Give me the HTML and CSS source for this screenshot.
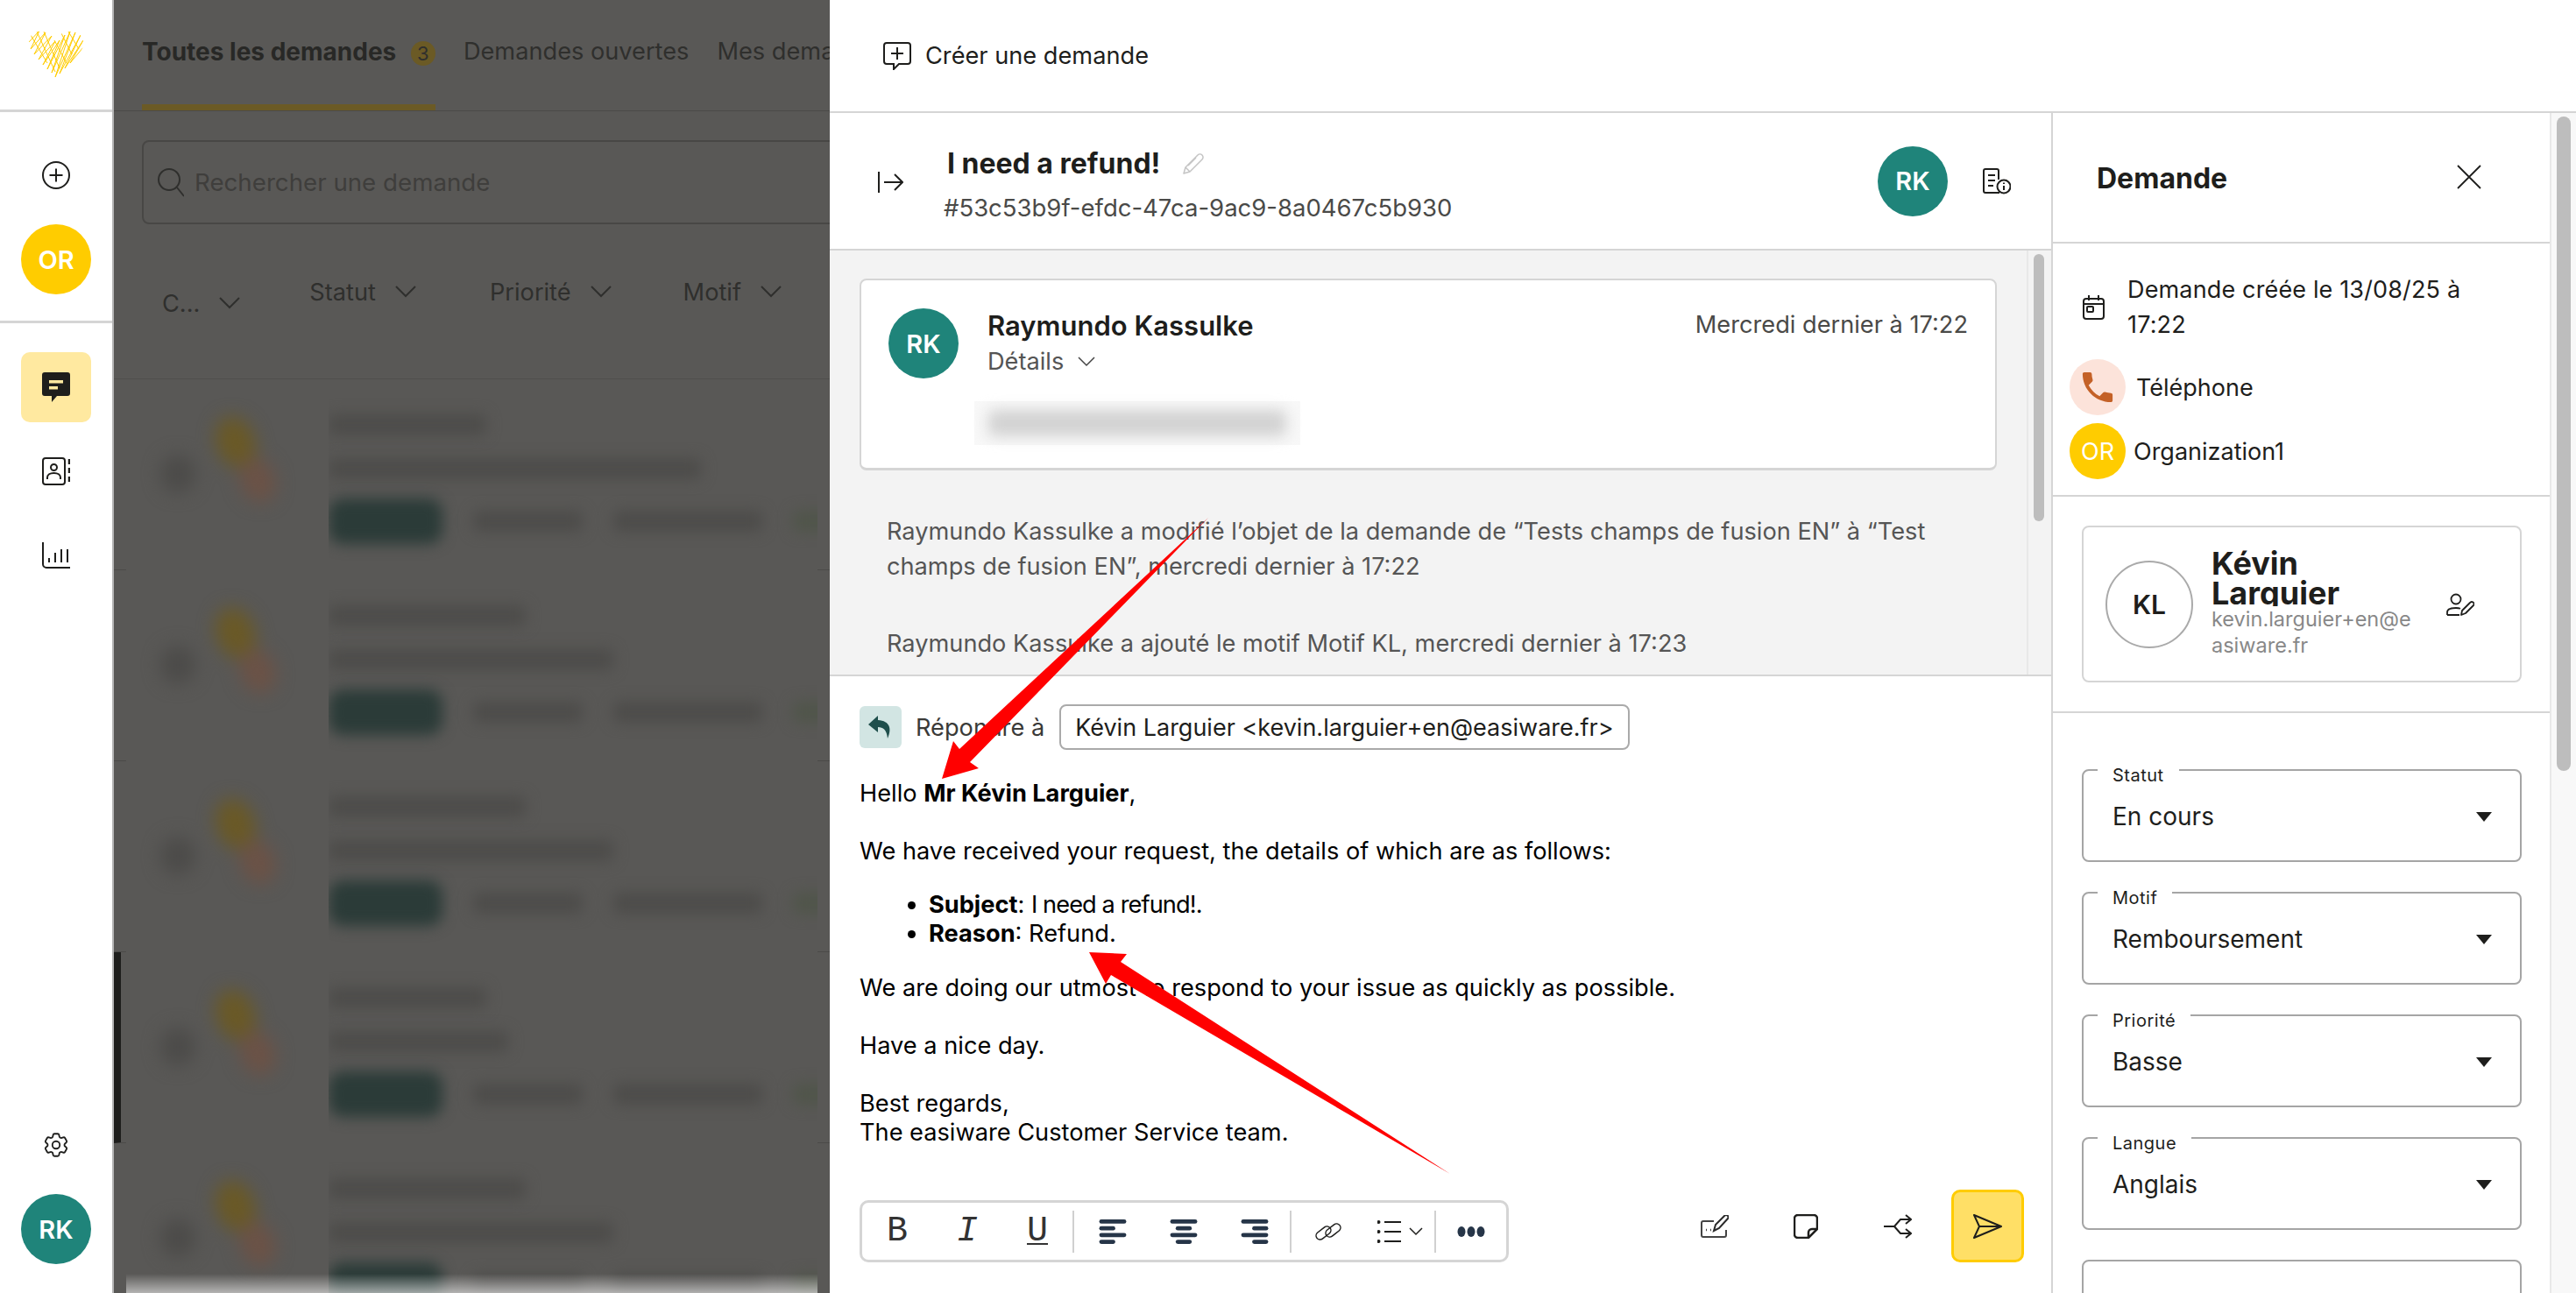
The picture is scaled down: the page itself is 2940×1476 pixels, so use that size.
FILE: index.html
```html
<!DOCTYPE html>
<html>
<head>
    <title>Demandes</title>
    <link rel="stylesheet" href="styles.css">
</head>
<body>
<div class="app">
    <!-- left nav -->
    <nav class="nav">
        <div class="nav-logo">
            <svg width="64" height="56" viewBox="0 0 64 56" fill="none">
                <defs><clipPath id="heart"><path d="M32 55C20 44 1 30 1 15 1 6 8 1 16 2c8 0 13 5 16 10 3-6 9-11 17-10 8 0 14 5 14 13 0 15-19 29-31 40z"/></clipPath></defs>
                <g clip-path="url(#heart)" stroke="#ffcc00" stroke-width="1" stroke-linejoin="round">
                    <path d="M1 14L13 1 3 22 20 3 7 28 27 7 12 34 31 13 17 40 36 12 22 45 42 6 27 49 48 2 31 54 54 3 36 50 60 6 42 44 63 12 48 38 63 20"/>
                    <path d="M3 6L22 38M10 2l21 46M18 2l18 42M30 12l14 26M38 4l12 24M46 2l12 20"/>
                </g>
            </svg>
        </div>
        <div class="nav-org">
            <svg class="ico-plus" width="32" height="32" viewBox="0 0 32 32" fill="none" stroke="#1e1e1c" stroke-width="2">
                <circle cx="16" cy="16" r="15"/><path d="M16 8.500v15M8.500 16h15"/>
            </svg>
            <div class="avatar avatar-or">OR</div>
        </div>
        <div class="nav-menu">
            <div class="nav-item nav-item-active">
                <svg width="32" height="34" viewBox="0 0 32 34">
                    <path fill="#1e1e1c" d="M3 0h26a3 3 0 0 1 3 3v21a3 3 0 0 1-3 3H17l-6 7v-7H3a3 3 0 0 1-3-3V3a3 3 0 0 1 3-3z"/>
                    <path fill="#ffe9a0" d="M8 9h16v3.500H8zM8 16h10v3.500H8z"/>
                </svg>
            </div>
            <div class="nav-item">
                <svg width="32" height="32" viewBox="0 0 32 32" fill="none" stroke="#1e1e1c" stroke-width="2">
                    <rect x="1" y="1" width="25" height="30" rx="3"/>
                    <circle cx="13.500" cy="11.500" r="3.500"/>
                    <path d="M6 25v-2c0-3 3-5 7.500-5s7.500 2 7.500 5v2"/>
                    <path d="M31 2v6M31 12v6M31 22v6" stroke-width="2.500"/>
                </svg>
            </div>
            <div class="nav-item">
                <svg width="32" height="30" viewBox="0 0 32 30" fill="none" stroke="#1e1e1c" stroke-width="2">
                    <path d="M1 0v25a4 4 0 0 0 4 4h27"/>
                    <path d="M8 18v5M15 12v11M22 8v15M29 8v15"/>
                </svg>
            </div>
        </div>
        <div class="nav-bottom">
            <svg width="34" height="34" viewBox="0 0 24 24" fill="none" stroke="#1e1e1c" stroke-width="1.300" stroke-linejoin="round">
                <path d="M9.594 3.940c.09-.542.56-.94 1.110-.94h2.593c.55 0 1.020.398 1.110.94l.213 1.281c.063.374.313.686.645.870.074.040.147.083.22.127.324.196.72.257 1.075.124l1.217-.456a1.125 1.125 0 011.370.49l1.296 2.247a1.125 1.125 0 01-.26 1.431l-1.003.827c-.293.24-.438.613-.431.992a6.759 6.759 0 010 .255c-.007.378.138.75.43.99l1.005.828c.424.35.534.954.26 1.430l-1.298 2.247a1.125 1.125 0 01-1.369.491l-1.217-.456c-.355-.133-.75-.072-1.076.124a6.570 6.570 0 01-.22.128c-.331.183-.581.495-.644.869l-.213 1.280c-.09.543-.56.941-1.110.941h-2.594c-.55 0-1.020-.398-1.110-.94l-.213-1.281c-.062-.374-.312-.686-.644-.87a6.520 6.520 0 01-.22-.127c-.325-.196-.72-.257-1.076-.124l-1.217.456a1.125 1.125 0 01-1.369-.49l-1.297-2.247a1.125 1.125 0 01.26-1.431l1.004-.827c.292-.24.437-.613.43-.992a6.932 6.932 0 010-.255c.007-.378-.138-.75-.43-.99l-1.004-.828a1.125 1.125 0 01-.26-1.430l1.297-2.247a1.125 1.125 0 011.370-.491l1.216.456c.356.133.751.072 1.076-.124.072-.044.146-.087.22-.128.332-.183.582-.495.644-.869l.214-1.281z"/>
                <circle cx="12" cy="12" r="3"/>
            </svg>
            <div class="avatar avatar-rk">RK</div>
        </div>
    </nav>

    <!-- dimmed list behind the panel -->
    <section class="backdrop">
        <div class="tabs">
            <div class="tab tab-active">Toutes les demandes <span class="tab-count">3</span></div>
            <div class="tab">Demandes ouvertes</div>
            <div class="tab">Mes demandes</div>
        </div>
        <div class="search">
            <svg width="30" height="34" viewBox="0 0 30 34" fill="none" stroke="#2f2f2d" stroke-width="2">
                <circle cx="13" cy="14" r="12"/><path d="M22 23l8 10"/>
            </svg>
            <span>Rechercher une demande</span>
        </div>
        <div class="filters">
            <div class="filter filter-low">C...<svg class="chev" width="24" height="14" viewBox="0 0 24 14"><path d="M1 1l11 11L23 1"/></svg></div>
            <div class="filter filter-statut">Statut<svg class="chev" width="24" height="14" viewBox="0 0 24 14"><path d="M1 1l11 11L23 1"/></svg></div>
            <div class="filter filter-prio">Priorité<svg class="chev" width="24" height="14" viewBox="0 0 24 14"><path d="M1 1l11 11L23 1"/></svg></div>
            <div class="filter">Motif<svg class="chev" width="24" height="14" viewBox="0 0 24 14"><path d="M1 1l11 11L23 1"/></svg></div>
        </div>
        <div class="rows">
            <div class="row"><div class="row-body">
                <svg class="blobs" width="231" height="217" viewBox="0 0 231 217"><ellipse cx="59" cy="108" rx="20" ry="22" fill="#4c4b49"/><ellipse cx="125" cy="72" rx="22" ry="30" fill="#6a5926" transform="rotate(-20 125 72)"/><ellipse cx="150" cy="115" rx="20" ry="26" fill="#6b5246" transform="rotate(-20 150 115)"/></svg>
                <div class="row-text">
                    <div class="bar bar-title"></div>
                    <div class="bar bar-sub"></div>
                    <div class="row-tags"><div class="pill"></div><div class="bar tag-a"></div><div class="bar tag-b"></div><div class="bar tag-c"></div></div>
                </div>
            </div></div>
            <div class="row"><div class="row-body">
                <svg class="blobs" width="231" height="217" viewBox="0 0 231 217"><ellipse cx="59" cy="108" rx="20" ry="22" fill="#4c4b49"/><ellipse cx="125" cy="72" rx="22" ry="30" fill="#6a5926" transform="rotate(-20 125 72)"/><ellipse cx="150" cy="115" rx="20" ry="26" fill="#6b5246" transform="rotate(-20 150 115)"/></svg>
                <div class="row-text">
                    <div class="bar bar-title-wide"></div>
                    <div class="bar bar-sub-short"></div>
                    <div class="row-tags"><div class="pill"></div><div class="bar tag-a"></div><div class="bar tag-b"></div><div class="bar tag-c"></div></div>
                </div>
            </div></div>
            <div class="row"><div class="row-body">
                <svg class="blobs" width="231" height="217" viewBox="0 0 231 217"><ellipse cx="59" cy="108" rx="20" ry="22" fill="#4c4b49"/><ellipse cx="125" cy="72" rx="22" ry="30" fill="#6a5926" transform="rotate(-20 125 72)"/><ellipse cx="150" cy="115" rx="20" ry="26" fill="#6b5246" transform="rotate(-20 150 115)"/></svg>
                <div class="row-text">
                    <div class="bar bar-title-wide"></div>
                    <div class="bar bar-sub-short"></div>
                    <div class="row-tags"><div class="pill"></div><div class="bar tag-a"></div><div class="bar tag-b"></div><div class="bar tag-c"></div></div>
                </div>
            </div></div>
            <div class="row row-selected"><div class="row-body">
                <svg class="blobs" width="231" height="217" viewBox="0 0 231 217"><ellipse cx="59" cy="108" rx="20" ry="22" fill="#4c4b49"/><ellipse cx="125" cy="72" rx="22" ry="30" fill="#6a5926" transform="rotate(-20 125 72)"/><ellipse cx="150" cy="115" rx="20" ry="26" fill="#6b5246" transform="rotate(-20 150 115)"/></svg>
                <div class="row-text">
                    <div class="bar bar-title"></div>
                    <div class="bar bar-sub-tiny"></div>
                    <div class="row-tags"><div class="pill"></div><div class="bar tag-a"></div><div class="bar tag-b"></div><div class="bar tag-c"></div></div>
                </div>
            </div></div>
            <div class="row"><div class="row-body">
                <svg class="blobs" width="231" height="217" viewBox="0 0 231 217"><ellipse cx="59" cy="108" rx="20" ry="22" fill="#4c4b49"/><ellipse cx="125" cy="72" rx="22" ry="30" fill="#6a5926" transform="rotate(-20 125 72)"/><ellipse cx="150" cy="115" rx="20" ry="26" fill="#6b5246" transform="rotate(-20 150 115)"/></svg>
                <div class="row-text">
                    <div class="bar bar-title-wide"></div>
                    <div class="bar bar-sub-short"></div>
                    <div class="row-tags"><div class="pill"></div><div class="bar tag-a"></div><div class="bar tag-b"></div><div class="bar tag-c"></div></div>
                </div>
            </div></div>
        </div>
        <div class="list-fade"></div>
    </section>

    <!-- ticket panel -->
    <main class="panel">
        <header class="panel-top">
            <svg width="32" height="32" viewBox="0 0 32 32" fill="none" stroke="#1e1e1c" stroke-width="2">
                <path d="M4 1h24a3 3 0 0 1 3 3v18a3 3 0 0 1-3 3H18l-6 6v-6H4a3 3 0 0 1-3-3V4a3 3 0 0 1 3-3z"/>
                <path d="M16 6v14M9 13h14"/>
            </svg>
            <span>Créer une demande</span>
        </header>
        <div class="panel-body">
            <div class="ticket">
                <div class="ticket-head">
                    <svg class="ico-collapse" width="29" height="24" viewBox="0 0 29 24" fill="none" stroke="#1e1e1c" stroke-width="2">
                        <path d="M1 0v24M7 12h21M19 3l9 9-9 9"/>
                    </svg>
                    <div class="ticket-title">
                        <div class="ticket-name">I need a refund!
                            <svg width="24" height="24" viewBox="0 0 24 24" fill="none" stroke="#c4c4c4" stroke-width="1.500" stroke-linejoin="round">
                                <path d="M1 23l2-7L17 2a3 3 0 0 1 5 5L8 21zM3 16l5 5M6 14l9-9"/>
                            </svg>
                        </div>
                        <div class="ticket-id">#53c53b9f-efdc-47ca-9ac9-8a0467c5b930</div>
                    </div>
                    <div class="avatar avatar-rk">RK</div>
                    <svg class="ico-doc" width="32" height="30" viewBox="0 0 32 30" fill="none" stroke="#1e1e1c" stroke-width="2">
                        <path d="M19 28H3a2 2 0 0 1-2-2V3a2 2 0 0 1 2-2h13a2 2 0 0 1 2 2v10"/>
                        <path d="M6 8h8M6 14h8M6 20h6"/>
                        <circle cx="24" cy="21" r="7.500"/>
                        <path d="M24 20v5M24 16.500v1.500"/>
                    </svg>
                </div>
                <div class="thread">
                    <div class="thread-main">
                        <article class="mail-card">
                            <div class="mail-head">
                                <div class="avatar avatar-rk">RK</div>
                                <div class="mail-from">
                                    <div class="mail-name">Raymundo Kassulke</div>
                                    <div class="mail-details">Détails
                                        <svg width="20" height="12" viewBox="0 0 20 12" fill="none" stroke="#444" stroke-width="1.500"><path d="M1 1l9 9 9-9"/></svg>
                                    </div>
                                </div>
                                <div class="mail-date">Mercredi dernier à 17:22</div>
                            </div>
                            <div class="mail-blur"><div class="mail-blur-text"></div></div>
                        </article>
                        <p class="activity">Raymundo Kassulke a modifié l’objet de la demande de “Tests champs de fusion EN” à “Test champs de fusion EN”, mercredi dernier à 17:22</p>
                        <p class="activity">Raymundo Kassulke a ajouté le motif Motif KL, mercredi dernier à 17:23</p>
                    </div>
                    <div class="scroll scroll-thread"><div class="scroll-thumb"></div></div>
                </div>
                <div class="composer">
                    <div class="reply-row">
                        <div class="reply-btn">
                            <svg width="28" height="26" viewBox="0 0 28 26"><path fill="#1f4f4c" d="M11 0L0 10l11 9v-6c6 0 10 3 11 13 5-11 3-20-11-21z"/></svg>
                        </div>
                        <span class="reply-label">Répondre à</span>
                        <div class="reply-to">Kévin Larguier &lt;kevin.larguier+en@easiware.fr&gt;</div>
                    </div>
                    <div class="mail-body">
                        <p>Hello <b>Mr Kévin Larguier</b>,</p>
                        <p>We have received your request, the details of which are as follows:</p>
                        <ul>
                            <li><b>Subject</b>: <span class="tight">I need a refund!.</span></li>
                            <li><b>Reason</b>: Refund.</li>
                        </ul>
                        <p>We are doing our utmost to respond to your issue as quickly as possible.</p>
                        <p>Have a nice day.</p>
                        <p>Best regards,<br>The easiware Customer Service team.</p>
                    </div>
                    <div class="composer-foot">
                        <div class="toolbar">
                            <div class="tb-group tb-text">
                                <span class="tool tool-letter">B</span>
                                <span class="tool tool-letter tool-i">I</span>
                                <span class="tool tool-letter tool-u">U</span>
                            </div>
                            <div class="tb-group tb-align">
                                <span class="tool">
                                    <svg width="32" height="28" viewBox="0 0 32 29" fill="#263548"><rect width="32" height="5" rx="2.500"/><rect y="8" width="19" height="5" rx="2.500"/><rect y="16" width="32" height="5" rx="2.500"/><rect y="24" width="19" height="5" rx="2.500"/></svg>
                                </span>
                                <span class="tool">
                                    <svg width="32" height="28" viewBox="0 0 32 29" fill="#263548"><rect width="32" height="5" rx="2.500"/><rect x="6.500" y="8" width="19" height="5" rx="2.500"/><rect y="16" width="32" height="5" rx="2.500"/><rect x="6.500" y="24" width="19" height="5" rx="2.500"/></svg>
                                </span>
                                <span class="tool">
                                    <svg width="32" height="28" viewBox="0 0 32 29" fill="#263548"><rect width="32" height="5" rx="2.500"/><rect x="13" y="8" width="19" height="5" rx="2.500"/><rect y="16" width="32" height="5" rx="2.500"/><rect x="13" y="24" width="19" height="5" rx="2.500"/></svg>
                                </span>
                            </div>
                            <div class="tb-group tb-insert">
                                <span class="tool tool-link">
                                    <svg width="32" height="22" viewBox="0 0 32 22" fill="none" stroke="#1e1e1c" stroke-width="1.500">
                                        <rect x="1" y="8" width="19" height="9" rx="4.500" transform="rotate(-38 10.500 12.500)"/>
                                        <rect x="12" y="5" width="19" height="9" rx="4.500" transform="rotate(-38 21.500 9.500)"/>
                                    </svg>
                                </span>
                                <span class="tool tool-list">
                                    <svg width="27" height="28" viewBox="0 0 27 28" fill="none" stroke="#1e1e1c" stroke-width="2">
                                        <path d="M8 3h19M8 14h19M8 25h19"/>
                                        <circle cx="1.500" cy="3" r="1"/><circle cx="1.500" cy="14" r="1"/><circle cx="1.500" cy="25" r="1"/>
                                    </svg>
                                    <svg width="16" height="10" viewBox="0 0 16 10" fill="none" stroke="#1e1e1c" stroke-width="1.500"><path d="M1 1l7 7 7-7"/></svg>
                                </span>
                            </div>
                            <div class="tb-group tb-more">
                                <span class="tool">
                                    <svg width="32" height="14" viewBox="0 0 32 14" fill="#263548"><ellipse cx="5" cy="7" rx="4.500" ry="6"/><ellipse cx="16" cy="7" rx="4.500" ry="6"/><ellipse cx="27" cy="7" rx="4.500" ry="6"/></svg>
                                </span>
                            </div>
                        </div>
                        <div class="actions">
                            <svg class="act-note" width="32" height="26" viewBox="0 0 32 26" fill="none" stroke="#444" stroke-width="2">
                                <path d="M15 7H3a2 2 0 0 0-2 2v14a2 2 0 0 0 2 2h24a2 2 0 0 0 2-2v-6"/>
                                <path d="M15 18l2-7 10-10a2.200 2.200 0 0 1 4 3L21 15z" stroke="#2a2a2a"/>
                                <path d="M6 17h1M11 17h1" stroke-width="2.500"/>
                            </svg>
                            <svg class="act-sticky" width="28" height="28" viewBox="0 0 28 28" fill="none" stroke="#1e1e1c" stroke-width="2.500">
                                <path d="M17 27H5a4 4 0 0 1-4-4V5a4 4 0 0 1 4-4h18a4 4 0 0 1 4 4v12z"/>
                                <path d="M17 27v-6a4 4 0 0 1 4-4h6"/>
                            </svg>
                            <svg class="act-split" width="32" height="28" viewBox="0 0 32 28" fill="none" stroke="#1e1e1c" stroke-width="2">
                                <path d="M0 14h12l7-8h12M12 14l7 8h12M25 1l6 5-6 5M25 17l6 5-6 5"/>
                            </svg>
                            <button class="send">
                                <svg width="33" height="28" viewBox="0 0 33 28" fill="none" stroke="#1e1e1c" stroke-width="2" stroke-linejoin="round">
                                    <path d="M1 1l31 13L1 27l6-13zM7 14h25"/>
                                </svg>
                            </button>
                        </div>
                    </div>
                </div>
            </div>

            <aside class="side">
                <div class="side-main">
                    <div class="side-head">
                        <h2>Demande</h2>
                        <svg width="28" height="28" viewBox="0 0 28 28" fill="none" stroke="#1e1e1c" stroke-width="1.800"><path d="M1 1l26 26M27 1L1 27"/></svg>
                    </div>
                    <div class="side-info">
                        <div class="info-date">
                            <svg width="25" height="28" viewBox="0 0 25 28" fill="none" stroke="#1e1e1c" stroke-width="2">
                                <rect x="1" y="4" width="23" height="23" rx="3"/><path d="M1 10h23M7 0v6M18 0v6"/><rect x="5" y="13" width="7" height="6" rx="1"/>
                            </svg>
                            <span>Demande créée le 13/08/25 à 17:22</span>
                        </div>
                        <div class="info-line">
                            <div class="info-round info-phone">
                                <svg width="38" height="38" viewBox="2 2 20 20"><path fill="#c46127" d="M6.620 10.790c1.440 2.830 3.760 5.140 6.590 6.590l2.200-2.200c.27-.27.67-.36 1.020-.24 1.120.37 2.330.57 3.570.57.55 0 1 .45 1 1V20c0 .55-.45 1-1 1-9.390 0-17-7.610-17-17 0-.55.45-1 1-1h3.500c.55 0 1 .45 1 1 0 1.250.2 2.450.57 3.570.11.35.03.74-.25 1.020l-2.200 2.200z"/></svg>
                            </div>
                            <span class="info-phone-label">Téléphone</span>
                        </div>
                        <div class="info-line">
                            <div class="info-round info-org">OR</div>
                            <span>Organization1</span>
                        </div>
                    </div>
                    <div class="side-contact">
                        <div class="contact-card">
                            <div class="contact-initials">KL</div>
                            <div class="contact-text">
                                <div class="contact-name">Kévin Larguier</div>
                                <div class="contact-mail">kevin.larguier+en@easiware.fr</div>
                            </div>
                            <svg class="contact-edit" width="32" height="26" viewBox="0 0 32 26" fill="none" stroke="#1e1e1c" stroke-width="1.800" stroke-linejoin="round">
                                <circle cx="11" cy="7" r="5.500"/>
                                <path d="M1 25v-3c0-3 3-5 10-5 2 0 4 .3 5 .8M1 25h14"/>
                                <path d="M17 25l1-5 9-9a2 2 0 0 1 4 3l-9 9z"/>
                            </svg>
                        </div>
                    </div>
                    <div class="side-fields">
                        <div class="field"><label>Statut</label><span>En cours</span><i class="caret"></i></div>
                        <div class="field"><label>Motif</label><span>Remboursement</span><i class="caret"></i></div>
                        <div class="field"><label>Priorité</label><span>Basse</span><i class="caret"></i></div>
                        <div class="field"><label>Langue</label><span>Anglais</span><i class="caret"></i></div>
                        <div class="field"></div>
                    </div>
                </div>
                <div class="scroll scroll-side"><div class="scroll-thumb"></div></div>
            </aside>
        </div>
    </main>

    <!-- red annotation arrows -->
    <svg class="arrows" width="2940" height="1476" viewBox="0 0 2940 1476">
        <path fill="#ff0000" d="M1075 889L1088 846 1095 855 1379 591 1107 870 1117 877z"/>
        <path fill="#ff0000" d="M1243 1087L1286 1089 1279 1098 1655 1340 1268 1113 1262 1123z"/>
    </svg>
</div>
</body>
</html>
```

FILE: styles.css
```css
* {
    box-sizing: border-box;
}
html, body {
    margin: 0;
    height: 100%;
    overflow: hidden;
}
body {
    font-family: "Inter", "Liberation Sans", sans-serif;
    color: #1e1e1c;
    background: #fff;
}
.app {
    position: relative;
    display: flex;
    width: 2940px;
    height: 1476px;
    overflow: hidden;
}
.avatar {
    display: flex;
    align-items: center;
    justify-content: center;
    flex: none;
    width: 80px;
    height: 80px;
    border-radius: 50%;
    color: #fff;
    font-size: 29px;
    font-weight: 600;
}
.avatar-or { background: #ffcc00; }
.avatar-rk { background: #1f847a; }

/* nav */
.nav {
    display: flex;
    flex-direction: column;
    flex: none;
    width: 130px;
    height: 100%;
    border-right: 2px solid #b5b5b5;
}
.nav-logo {
    display: flex;
    align-items: center;
    justify-content: center;
    height: 128px;
    padding-bottom: 2px;
    border-bottom: 3px solid #d5d5d5;
}
.nav-org {
    display: flex;
    flex-direction: column;
    align-items: center;
    height: 241px;
    padding-top: 56px;
    border-bottom: 3px solid #d5d5d5;
}
.ico-plus {
    margin-bottom: 40px;
}
.nav-menu {
    display: flex;
    flex-direction: column;
    align-items: center;
    padding-top: 33px;
}
.nav-item {
    display: flex;
    align-items: center;
    justify-content: center;
    width: 80px;
    height: 80px;
    margin-bottom: 16px;
    border-radius: 10px;
}
.nav-item-active { background: #ffe9a0; }
.nav-bottom {
    display: flex;
    flex-direction: column;
    align-items: center;
    gap: 39px;
    margin-top: auto;
    padding-bottom: 33px;
}

/* dimmed list */
.backdrop {
    position: relative;
    display: flex;
    flex-direction: column;
    flex: none;
    width: 817px;
    height: 100%;
    overflow: hidden;
    background: #595856;
    color: #2f2f2d;
    font-size: 27.2px;
}
.tabs {
    display: flex;
    gap: 32px;
    flex: none;
    height: 127px;
    padding-left: 32px;
    border-bottom: 1px solid #4b4a48;
    white-space: nowrap;
}
.tab {
    height: 126px;
    padding-top: 42px;
}
.tab-active {
    font-size: 28px;
    font-weight: 700;
    color: #282826;
    border-bottom: 7px solid #6b5a25;
}
.tab-count {
    display: inline-block;
    width: 28px;
    height: 28px;
    margin-left: 10px;
    border-radius: 50%;
    background: #6b5a25;
    color: #2f2f2d;
    font-size: 22px;
    font-weight: 400;
    line-height: 28px;
    text-align: center;
}
.search {
    display: flex;
    align-items: center;
    gap: 12px;
    flex: none;
    width: 900px;
    height: 96px;
    margin: 33px 0 0 32px;
    padding-left: 16px;
    border: 2px solid #484745;
    border-radius: 8px;
    color: #3f3e3c;
    font-size: 27.7px;
    white-space: nowrap;
}
.filters {
    display: flex;
    flex: none;
    height: 177px;
    padding: 60px 0 0 55px;
    border-bottom: 1px solid #4f4e4c;
}
.filter {
    display: flex;
    align-items: center;
    gap: 22px;
    height: 34px;
    margin-right: 85px;
}
.filter-low {
    margin-top: 13px;
    margin-right: 79px;
}
.filter-statut { margin-right: 84px; }
.filter-prio { margin-right: 82px; }
.chev {
    fill: none;
    stroke: #2f2f2d;
    stroke-width: 2;
}
.row {
    height: 218px;
    border-bottom: 1px solid #4b4a48;
}
.row-selected {
    border-left: 8px solid #1e1e1c;
}
.row-body {
    display: flex;
    height: 218px;
    margin: 0 14px;
    background: #595856;
}
.row-selected .row-body { margin-left: 6px; }
.blobs {
    flex: none;
    filter: blur(10px);
}
.row-text {
    flex: 1;
    min-width: 0;
    padding-top: 40px;
    overflow: hidden;
}
.bar {
    height: 24px;
    background: #4d4c4a;
    border-radius: 6px;
    filter: blur(8px);
}
.bar-title { width: 180px; }
.bar-title-wide { width: 225px; }
.bar-sub, .bar-sub-short, .bar-sub-tiny { margin-top: 26px; }
.bar-sub { width: 425px; }
.bar-sub-short { width: 325px; }
.bar-sub-tiny { width: 205px; }
.row-tags {
    display: flex;
    align-items: center;
    gap: 35px;
    margin-top: 22px;
}
.pill {
    flex: none;
    width: 130px;
    height: 52px;
    border-radius: 16px;
    background: #2b3b38;
    filter: blur(8px);
}
.tag-a { flex: none; width: 125px; }
.tag-b { flex: none; width: 170px; }
.tag-c { flex: none; width: 60px; background: #50554a; }
.list-fade {
    position: absolute;
    left: 14px;
    right: 14px;
    bottom: 0;
    height: 22px;
    background: linear-gradient(rgba(255, 255, 255, 0), rgba(255, 255, 255, 0.55));
}

/* panel */
.panel {
    display: flex;
    flex-direction: column;
    flex: 1;
    min-width: 0;
    background: #fff;
}
.panel-top {
    display: flex;
    align-items: center;
    gap: 16px;
    flex: none;
    height: 129px;
    padding: 0 0 0 61px;
    border-bottom: 2px solid #d5d5d5;
    font-size: 27.2px;
}
.panel-body {
    display: flex;
    flex: 1;
    min-height: 0;
}
.ticket {
    display: flex;
    flex-direction: column;
    flex: none;
    width: 1396px;
    border-right: 2px solid #d5d5d5;
}
.ticket-head {
    display: flex;
    align-items: center;
    flex: none;
    height: 157px;
    padding-left: 55px;
    border-bottom: 2px solid #d5d5d5;
}
.ico-collapse {
    flex: none;
    margin-right: 46px;
    margin-top: 2px;
}
.ticket-title {
    flex: 1;
    align-self: flex-start;
    padding-top: 38px;
}
.ticket-name {
    display: flex;
    align-items: center;
    gap: 26px;
    padding-left: 4px;
    font-size: 32px;
    font-weight: 700;
    line-height: 40px;
}
.ticket-id {
    margin-top: 12px;
    color: #4a4a48;
    font-size: 27.5px;
    line-height: 36px;
}
.ico-doc {
    flex: none;
    margin: 0 46px 0 40px;
}

/* thread */
.thread {
    display: flex;
    flex: none;
    height: 486px;
    border-bottom: 2px solid #d5d5d5;
    background: #f3f3f3;
}
.thread-main {
    flex: 1;
    min-width: 0;
    padding: 32px 34px 0 34px;
}
.mail-card {
    height: 219px;
    padding: 32px 31px 0;
    background: #fff;
    border: 2px solid #d5d5d5;
    border-bottom-width: 3px;
    border-radius: 8px;
}
.mail-head {
    display: flex;
    gap: 33px;
}
.mail-from {
    flex: 1;
}
.mail-name {
    font-size: 31px;
    font-weight: 600;
    line-height: 40px;
}
.mail-details {
    display: flex;
    align-items: center;
    gap: 16px;
    margin-top: 2px;
    color: #555;
    font-size: 27.2px;
    line-height: 38px;
}
.mail-date {
    color: #4a4a48;
    font-size: 27.2px;
    line-height: 38px;
}
.mail-blur {
    width: 372px;
    height: 50px;
    margin: 26px 0 0 98px;
    padding: 10px 16px;
    background: #f8f8f8;
}
.mail-blur-text {
    height: 30px;
    background: #d2d2d2;
    border-radius: 6px;
    filter: blur(8px);
}
.activity {
    margin: 48px 0 0;
    padding-left: 31px;
    color: #555;
    font-size: 27.2px;
    line-height: 40px;
}
.mail-card + .activity { margin-top: 50px; }
.scroll {
    flex: none;
    border-left: 2px solid #e8e8e8;
}
.scroll-thread {
    width: 28px;
    padding: 4px 8px 0 6px;
}
.scroll-thread .scroll-thumb { height: 305px; }
.scroll-thumb {
    border-radius: 8px;
    background: #bdbdbd;
}

/* composer */
.composer {
    display: flex;
    flex-direction: column;
    flex: 1;
    min-height: 0;
    padding: 32px 31px 35px 34px;
}
.reply-row {
    display: flex;
    align-items: center;
    flex: none;
}
.reply-btn {
    display: flex;
    align-items: center;
    justify-content: center;
    width: 48px;
    height: 48px;
    border-radius: 6px;
    background: #d2e5e3;
}
.reply-label {
    margin: 0 17px 0 16px;
    color: #3a3a38;
    font-size: 27.2px;
}
.reply-to {
    display: flex;
    align-items: center;
    height: 52px;
    padding: 0 16px;
    border: 2px solid #aaa;
    border-radius: 8px;
    font-size: 27px;
    white-space: nowrap;
}
.mail-body {
    flex: 1;
    margin-top: 33px;
    color: #000;
    font-size: 27.2px;
    line-height: 33px;
}
.mail-body p {
    margin: 0 0 33px;
}
.mail-body ul {
    margin: -5px 0 29px;
    padding-left: 79px;
}
.tight {
    letter-spacing: -0.9px;
}
.composer-foot {
    display: flex;
    align-items: flex-end;
    justify-content: space-between;
    flex: none;
}
.toolbar {
    display: flex;
    align-items: center;
    width: 741px;
    height: 71px;
    border: 3px solid #d5d5d5;
    border-radius: 10px;
}
.tb-group {
    display: flex;
    align-items: center;
    height: 48px;
}
.tb-align, .tb-insert, .tb-more {
    border-left: 2px solid #d0d0d0;
}
.tb-text { width: 240px; }
.tb-align { width: 248px; padding-left: 4px; }
.tb-insert { width: 165px; }
.tb-more { flex: 1; }
.tool {
    display: flex;
    align-items: center;
    justify-content: center;
    flex: 1;
    gap: 9px;
}
.tool-letter {
    font-family: "Liberation Mono", monospace;
    font-size: 40px;
    line-height: 44px;
    color: #333;
}
.tool-i { font-style: italic; }
.tool-u { text-decoration: underline; text-underline-offset: 3px; text-decoration-thickness: 2px; }
.tool-link { flex: none; width: 84px; }
.tool-list { flex: none; width: 79px; }
.actions {
    display: flex;
    align-items: center;
}
.act-note { margin-right: 74px; }
.act-sticky { margin-right: 75px; }
.act-split { margin-right: 45px; }
.send {
    display: flex;
    align-items: center;
    justify-content: center;
    width: 83px;
    height: 83px;
    padding: 0;
    background: #ffdf66;
    border: 3px solid #ffcc00;
    border-radius: 10px;
}

/* side */
.side {
    display: flex;
    flex: 1;
    min-width: 0;
}
.side-main {
    flex: 1;
    min-width: 0;
}
.side-head {
    display: flex;
    align-items: center;
    justify-content: space-between;
    height: 149px;
    padding: 0 78px 2px 50px;
    border-bottom: 2px solid #d5d5d5;
}
.side-head h2 {
    margin: 4px 0 0;
    font-size: 32px;
    font-weight: 700;
}
.side-info {
    height: 289px;
    padding: 33px 0 0 19px;
    border-bottom: 2px solid #d5d5d5;
    font-size: 27px;
}
.info-date {
    display: flex;
    align-items: center;
    gap: 26px;
    padding: 0 50px 0 15px;
    letter-spacing: 0.15px;
    line-height: 40px;
}
.info-date svg { flex: none; }
.info-line {
    display: flex;
    align-items: center;
    gap: 9px;
    height: 64px;
    margin-top: 9px;
}
.info-line:nth-child(2) { margin-top: 19px; }
.info-round {
    display: flex;
    align-items: center;
    justify-content: center;
    flex: none;
    width: 64px;
    height: 64px;
    border-radius: 50%;
}
.info-phone { background: #fce3da; }
.info-phone-label { margin-left: 3px; }
.info-org {
    background: #ffcc00;
    color: #fff;
}
.side-contact {
    height: 247px;
    padding: 33px 32px 0 33px;
    border-bottom: 2px solid #d5d5d5;
}
.contact-card {
    display: flex;
    align-items: center;
    height: 179px;
    padding-left: 25px;
    border: 2px solid #d5d5d5;
    border-radius: 8px;
}
.contact-initials {
    display: flex;
    align-items: center;
    justify-content: center;
    flex: none;
    width: 100px;
    height: 100px;
    border: 2px solid #aaa;
    border-radius: 50%;
    font-size: 30px;
    font-weight: 600;
}
.contact-text {
    flex: none;
    width: 240px;
    margin-left: 21px;
    margin-top: -2px;
}
.contact-name {
    height: 66px;
    overflow: hidden;
    font-size: 36px;
    font-weight: 700;
    line-height: 34px;
}
.contact-mail {
    color: #888;
    font-size: 23.5px;
    line-height: 30px;
    word-break: break-all;
}
.contact-edit {
    flex: none;
    margin-left: 28px;
}
.side-fields {
    display: flex;
    flex-direction: column;
    gap: 34px;
    padding: 64px 32px 0 33px;
}
.field {
    position: relative;
    display: flex;
    align-items: center;
    justify-content: space-between;
    flex: none;
    height: 106px;
    padding: 2px 32px 0 33px;
    border: 2px solid #a5a5a5;
    border-radius: 8px;
    font-size: 28px;
}
.field label {
    position: absolute;
    top: -10px;
    left: 16px;
    padding: 0 17px;
    background: #fff;
    font-size: 20px;
    letter-spacing: 0.5px;
    line-height: 30px;
}
.caret {
    width: 0;
    height: 0;
    border-left: 9px solid transparent;
    border-right: 9px solid transparent;
    border-top: 11px solid #1e1e1c;
}
.scroll-side {
    width: 30px;
    padding: 4px 6px 0 6px;
    background: #f8f8f8;
}
.scroll-side .scroll-thumb { height: 747px; }

.arrows {
    position: absolute;
    top: 0;
    left: 0;
    pointer-events: none;
}
```
